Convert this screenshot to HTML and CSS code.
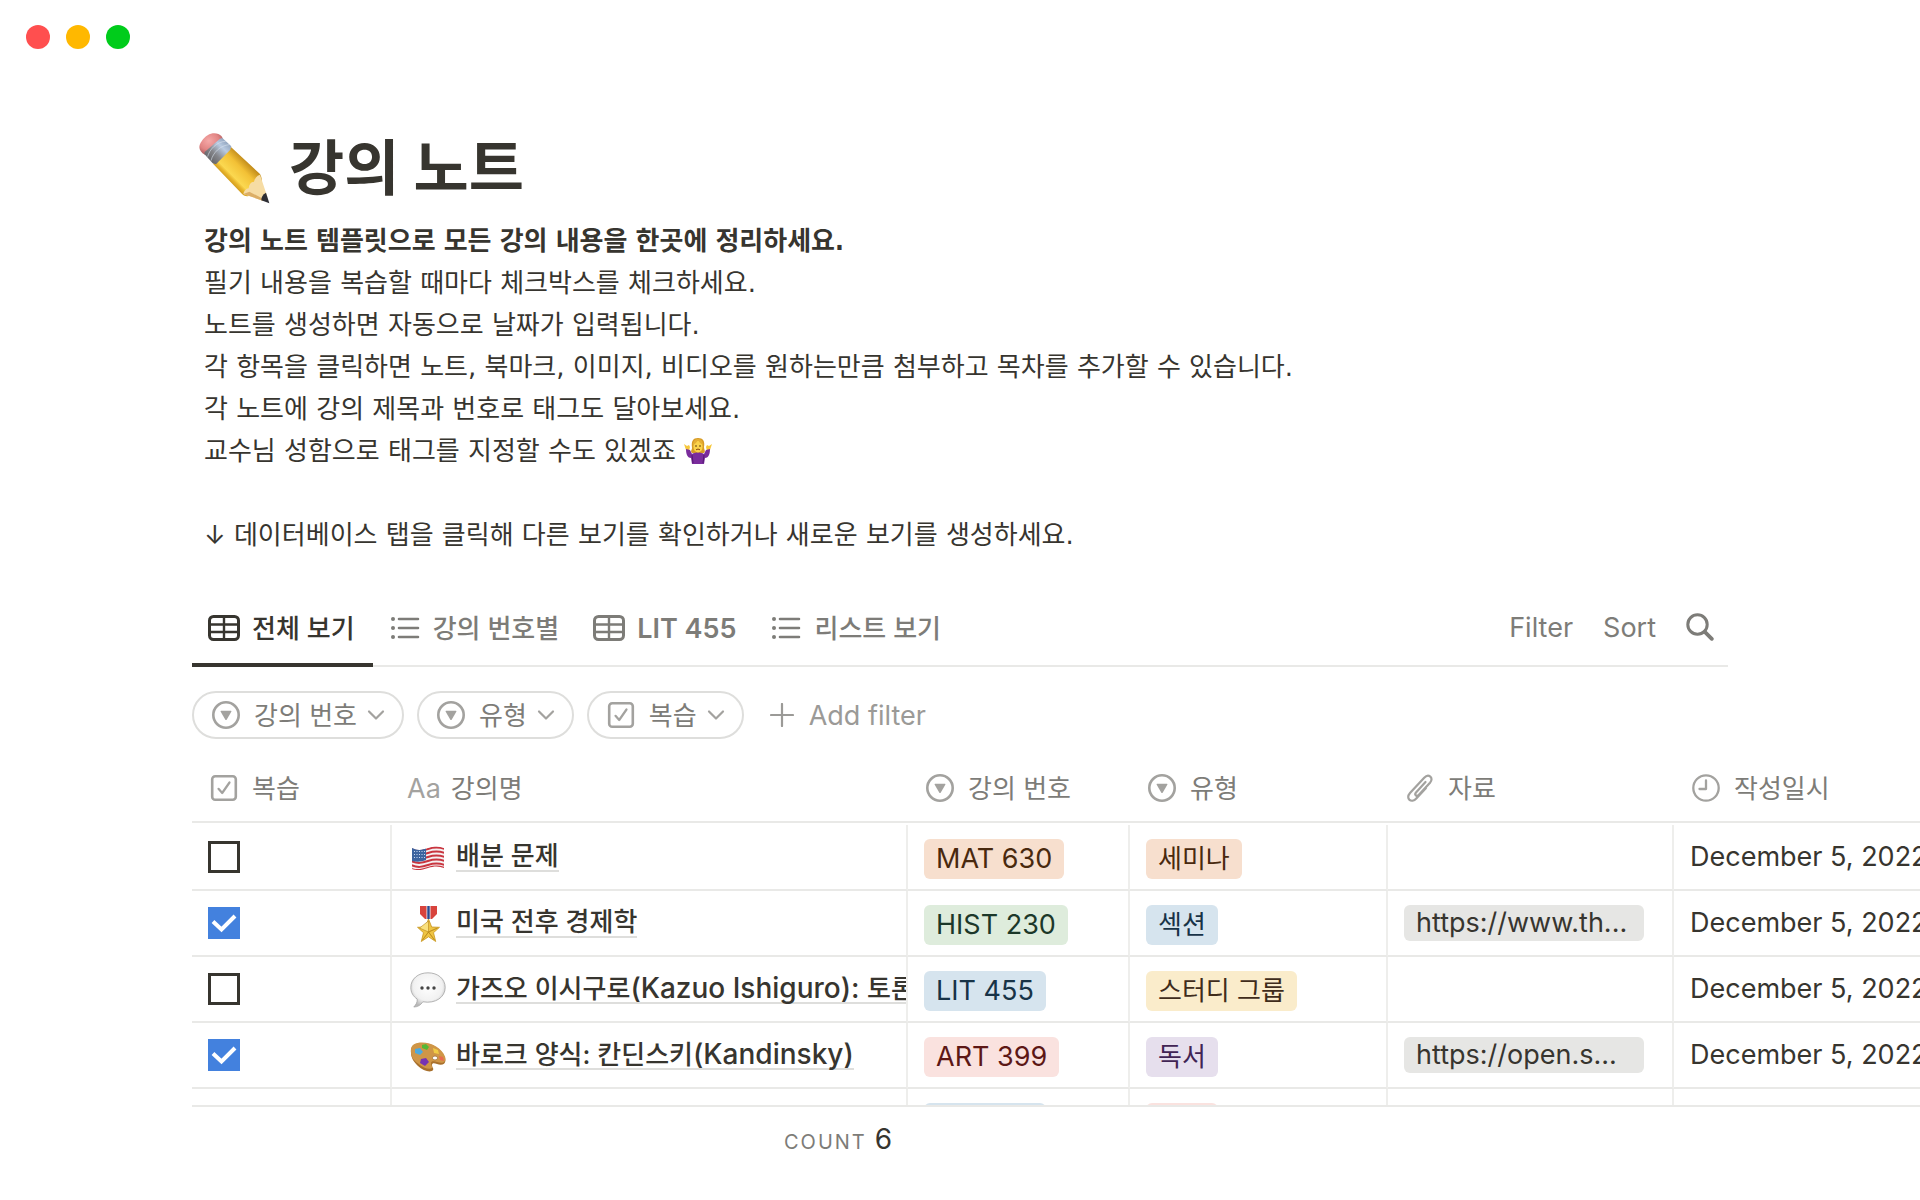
FILE: index.html
```html
<!DOCTYPE html>
<html lang="ko">
<head>
    <meta charset="UTF-8">
    <meta name="viewport" content="width=device-width, initial-scale=1.0">
    <title>강의 노트</title>
    <link rel="stylesheet" href="styles.css">
</head>
<body>
    <!-- shared icons -->
    <svg class="sprite" aria-hidden="true">
        <symbol id="i-table" viewBox="0 0 32 32">
            <rect x="1.5" y="4.5" width="29" height="23" rx="4" fill="none" stroke="currentColor" stroke-width="3"/>
            <path d="M2 12.5h28M2 20h28M16 5v22" fill="none" stroke="currentColor" stroke-width="2.4"/>
        </symbol>
        <symbol id="i-list" viewBox="0 0 32 32">
            <path d="M10 7h19M10 16h19M10 25h19" fill="none" stroke="currentColor" stroke-width="2.6" stroke-linecap="round"/>
            <circle cx="4" cy="7" r="2"/><circle cx="4" cy="16" r="2"/><circle cx="4" cy="25" r="2"/>
        </symbol>
        <symbol id="i-select" viewBox="0 0 28 28">
            <circle cx="14" cy="14" r="12.7" fill="none" stroke="currentColor" stroke-width="2.6"/>
            <path d="M9.2 9.8h9.6q1 0 .5 1l-4.5 7.7q-.8 1.2-1.6 0L8.7 10.8q-.5-1 .5-1z"/>
        </symbol>
        <symbol id="i-check" viewBox="0 0 28 28">
            <rect x="2.2" y="2.2" width="23.6" height="23.6" rx="3" fill="none" stroke="currentColor" stroke-width="2.6"/>
            <path d="M8.5 14.8l3.7 4.2 7.3-10.5" fill="none" stroke="currentColor" stroke-width="2.2" stroke-linecap="round" stroke-linejoin="round"/>
        </symbol>
        <symbol id="i-clip" viewBox="0 0 28 28">
            <path d="M19.5 8L10 18.5c-2 2.3.8 4.6 2.7 2.5L24 8.7c4.3-5-1.5-9.7-5.8-5L4 19c-5 5.700 1.500 10.800 6.300 5.500l9.500-10.300" fill="none" stroke="currentColor" stroke-width="2.2" stroke-linecap="round"/>
        </symbol>
        <symbol id="i-clock" viewBox="0 0 28 28">
            <circle cx="14" cy="14" r="12.7" fill="none" stroke="currentColor" stroke-width="2.3"/>
            <path d="M14 6.5V15H7.5" fill="none" stroke="currentColor" stroke-width="2.3" stroke-linecap="round" stroke-linejoin="round"/>
        </symbol>
        <symbol id="i-down" viewBox="0 0 18 18">
            <path d="M2 5.5l7 7 7-7" fill="none" stroke="currentColor" stroke-width="2.2" stroke-linecap="round" stroke-linejoin="round"/>
        </symbol>
    </svg>

    <div class="page">
        <div class="window-dots">
            <span class="dot red"></span>
            <span class="dot yellow"></span>
            <span class="dot green"></span>
        </div>

        <header class="title">
            <svg class="title-icon" viewBox="12 6 216 216" aria-hidden="true">
                <defs>
                    <linearGradient id="wood" gradientUnits="userSpaceOnUse" x1="95" y1="155" x2="155" y2="95">
                        <stop offset="0" stop-color="#c48b14"/>
                        <stop offset=".2" stop-color="#e8b62c"/>
                        <stop offset=".3" stop-color="#fbd850"/>
                        <stop offset=".7" stop-color="#f3c136"/>
                        <stop offset="1" stop-color="#c48e1c"/>
                    </linearGradient>
                    <linearGradient id="metal" x1="0" y1="1" x2="1" y2="0">
                        <stop offset="0" stop-color="#4d4d50"/>
                        <stop offset=".4" stop-color="#85868b"/>
                        <stop offset=".65" stop-color="#b9cbe2"/>
                        <stop offset="1" stop-color="#7488a3"/>
                    </linearGradient>
                    <radialGradient id="rubber" cx=".4" cy=".35" r=".7">
                        <stop offset="0" stop-color="#f5a9a8"/>
                        <stop offset=".6" stop-color="#e28584"/>
                        <stop offset="1" stop-color="#a8575a"/>
                    </radialGradient>
                </defs>
                <path d="M30 74C12 64 8 50 20 34 34 12 54 6 70 12c8 3 12 8 14 16z" fill="url(#rubber)"/>
                <path d="M54 101L107 50l88 82c8 12 6 34 6 46l-40 20c-8 2-16-1-22-8z" fill="url(#wood)"/>
                <path d="M82 24l27 25-3 10-43 44-10-3-25-28 1-6 46-40z" fill="url(#metal)"/>
                <path d="M38 80C42 60 66 34 92 34M48 92C54 68 76 46 103 44" stroke="#d8e2ef" stroke-width="3" fill="none" opacity=".6"/>
                <path d="M195 134l22 66-14 12-58-20c2-10 8-16 16-17 1-12 6-19 16-20 2-10 8-18 18-21z" fill="#f6dca4"/>
                <path d="M145 192l58 20 4-4-44-23z" fill="#dcae66"/>
                <path d="M213 188l10 32-24-9c0-10 4-18 14-23z" fill="#2c2d33"/>
            </svg>
            <h1>강의 노트</h1>
        </header>

        <div class="intro">
            <p><strong>강의 노트 템플릿으로 모든 강의 내용을 한곳에 정리하세요.</strong></p>
            <p>필기 내용을 복습할 때마다 체크박스를 체크하세요.</p>
            <p>노트를 생성하면 자동으로 날짜가 입력됩니다.</p>
            <p>각 항목을 클릭하면 노트, 북마크, 이미지, 비디오를 원하는만큼 첨부하고 목차를 추가할 수 있습니다.</p>
            <p>각 노트에 강의 제목과 번호로 태그도 달아보세요.</p>
            <p>교수님 성함으로 태그를 지정할 수도 있겠죠
                <svg class="shrug" viewBox="0 0 28 28" aria-hidden="true">
                    <path d="M8 11C7 4 9 1 14 1s7 3 6 9c0 3 2 4 0 6H8c-2-2 0-3 0-5z" fill="#d79b25"/>
                    <path d="M0 7l3 2 2-1 1 2-1 4-3-1zM28 7l-3 2-2-1-1 2 1 4 3-1z" fill="#f7c83c"/>
                    <path d="M2 12l4 1 2 4c3-2 9-2 12 0l2-4 4-1c0 6-2 9-5 9l-1 6H8l-1-6c-3 0-5-3-5-9z" fill="#7a2c9c"/>
                    <path d="M8 18l1 8M20 18l-1 8" stroke="#541871" stroke-width="1"/>
                    <ellipse cx="14" cy="9.5" rx="4.6" ry="6" fill="#fbd24b"/>
                    <path d="M9 8c2-1 4-3 5-5 1 2 3 4 5 5 0-4-2-6-5-6S9 4 9 8z" fill="#e5ae35"/>
                    <circle cx="12" cy="9" r=".8" fill="#4b2c0b"/><circle cx="16" cy="9" r=".8" fill="#4b2c0b"/>
                    <path d="M12 12.8q2-1.500 4 0" stroke="#8a4a12" stroke-width="1" fill="none"/>
                </svg>
            </p>
            <p>&nbsp;</p>
            <p><span class="arrow">↓</span> 데이터베이스 탭을 클릭해 다른 보기를 확인하거나 새로운 보기를 생성하세요.</p>
        </div>

        <nav class="tabs">
            <button class="tab active"><svg><use href="#i-table"/></svg><span class="ko">전체 보기</span></button>
            <button class="tab"><svg><use href="#i-list"/></svg><span class="ko">강의 번호별</span></button>
            <button class="tab latin"><svg><use href="#i-table"/></svg>LIT 455</button>
            <button class="tab"><svg><use href="#i-list"/></svg><span class="ko">리스트 보기</span></button>
            <div class="tools">
                <button>Filter</button>
                <button>Sort</button>
                <button aria-label="Search">
                    <svg viewBox="0 0 28 28">
                        <circle cx="11.5" cy="11.5" r="9.7" fill="none" stroke="currentColor" stroke-width="3"/>
                        <path d="M18.800 18.800l7 7" stroke="currentColor" stroke-width="3.8" stroke-linecap="round"/>
                    </svg>
                </button>
            </div>
        </nav>

        <div class="filters">
            <button class="pill"><svg class="icon"><use href="#i-select"/></svg><span class="ko">강의 번호</span><svg class="down"><use href="#i-down"/></svg></button>
            <button class="pill"><svg class="icon"><use href="#i-select"/></svg><span class="ko">유형</span><svg class="down"><use href="#i-down"/></svg></button>
            <button class="pill"><svg class="icon"><use href="#i-check"/></svg><span class="ko">복습</span><svg class="down"><use href="#i-down"/></svg></button>
            <button class="add-filter">
                <svg viewBox="0 0 24 24"><path d="M12 1v22M1 12h22" stroke="currentColor" stroke-width="2.2" stroke-linecap="round"/></svg>
                Add filter
            </button>
        </div>

        <div class="table-scroll">
            <table>
                <colgroup>
                    <col class="col-check">
                    <col class="col-name">
                    <col class="col-number">
                    <col class="col-type">
                    <col class="col-file">
                    <col class="col-date">
                </colgroup>
                <thead>
                    <tr>
                        <th><div class="head"><svg class="icon"><use href="#i-check"/></svg><span class="ko">복습</span></div></th>
                        <th><div class="head name"><span class="aa">Aa</span><span class="ko">강의명</span></div></th>
                        <th><div class="head"><svg class="icon"><use href="#i-select"/></svg><span class="ko">강의 번호</span></div></th>
                        <th><div class="head"><svg class="icon"><use href="#i-select"/></svg><span class="ko">유형</span></div></th>
                        <th><div class="head"><svg class="icon"><use href="#i-clip"/></svg><span class="ko">자료</span></div></th>
                        <th><div class="head"><svg class="icon"><use href="#i-clock"/></svg><span class="ko">작성일시</span></div></th>
                    </tr>
                </thead>
                <tbody>
                    <tr>
                        <td><input type="checkbox" aria-label="배분 문제 복습"></td>
                        <td>
                            <div class="name-cell">
                                <svg class="emoji" viewBox="0 0 36 36" aria-hidden="true">
                                    <clipPath id="wave"><path d="M2 8c6 3 10 2 16 0s11-2 16 0v20c-5-2-10-2-16 0s-10 3-16 1z"/></clipPath>
                                    <g clip-path="url(#wave)">
                                        <path d="M0 0h36v36H0z" fill="#f5f1f2"/>
                                        <path d="M1 9c7 3 11 2 17 0s11-2 17 0M1 13c7 3 11 2 17 0s11-2 17 0M1 17c7 3 11 2 17 0s11-2 17 0M1 21c7 3 11 2 17 0s11-2 17 0M1 25c7 3 11 2 17 0s11-2 17 0M1 29c7 2 11 1 17-1s11-2 17 0" fill="none" stroke="#c9353f" stroke-width="2"/>
                                        <path d="M2 6h14v14c-5 2-9 2-14 1z" fill="#3c649f"/>
                                        <path d="M4 11.5h11M4 14.5h11M4 17.5h11" stroke="#c9d8ee" stroke-width="1" stroke-dasharray="1 1.5"/>
                                    </g>
                                </svg>
                                <a href="#">배분 문제</a>
                            </div>
                        </td>
                        <td><span class="tag latin orange">MAT 630</span></td>
                        <td><span class="tag orange">세미나</span></td>
                        <td></td>
                        <td class="date">December 5, 2022 11:05 AM</td>
                    </tr>
                    <tr>
                        <td><input type="checkbox" aria-label="미국 전후 경제학 복습" checked></td>
                        <td>
                            <div class="name-cell">
                                <svg class="emoji" viewBox="0 0 36 36" aria-hidden="true">
                                    <path d="M10 0h17v8l-5 5h-7l-5-5z" fill="#d8433c"/>
                                    <path d="M16.500 0h4v13h-4z" fill="#e9eef7"/>
                                    <path d="M17.300 0h2.400v13h-2.400z" fill="#29498f"/>
                                    <path d="M18.500 13l3.200 8 7.800.3-6 5.400 2.200 8.800-7.200-4.700-7.200 4.700 2.200-8.800-6-5.400 7.800-.3z" fill="#efc544" stroke="#c8961f" stroke-width=".8"/>
                                    <path d="M18.500 15v11l9-4-9 4 6 8-6-8-6 8 6-8-9-4z" fill="#f9e07e" stroke="#b78518" stroke-width=".6"/>
                                </svg>
                                <a href="#">미국 전후 경제학</a>
                            </div>
                        </td>
                        <td><span class="tag latin green">HIST 230</span></td>
                        <td><span class="tag blue">섹션</span></td>
                        <td><a class="file" href="#">https://www.th...</a></td>
                        <td class="date">December 5, 2022 11:05 AM</td>
                    </tr>
                    <tr>
                        <td><input type="checkbox" aria-label="가즈오 이시구로 복습"></td>
                        <td>
                            <div class="name-cell">
                                <svg class="emoji" viewBox="0 0 36 36" aria-hidden="true">
                                    <radialGradient id="bubble" cx=".5" cy=".4" r=".6">
                                        <stop offset="0" stop-color="#ffffff"/>
                                        <stop offset=".7" stop-color="#f1f1f1"/>
                                        <stop offset="1" stop-color="#b9b9b9"/>
                                    </radialGradient>
                                    <path d="M18 .8C8 .8.800 7 .8 15.500c0 5 2.400 9 6.400 11.500.4 3-1 5.500-3.400 8 4 0 7-2 9-5.200 13 2.200 22.400-4.800 22.400-14.300C35.200 7 28 .8 18 .8z" fill="url(#bubble)" stroke="#a3a3a3" stroke-width=".8"/>
                                    <circle cx="12" cy="16" r="1.7" fill="#454545"/><circle cx="18" cy="16" r="1.7" fill="#454545"/><circle cx="24" cy="16" r="1.7" fill="#454545"/>
                                </svg>
                                <a href="#">가즈오 이시구로<span class="latin">(Kazuo Ishiguro): </span>토론</a>
                            </div>
                        </td>
                        <td><span class="tag latin blue">LIT 455</span></td>
                        <td><span class="tag yellow">스터디 그룹</span></td>
                        <td></td>
                        <td class="date">December 5, 2022 11:05 AM</td>
                    </tr>
                    <tr>
                        <td><input type="checkbox" aria-label="바로크 양식 복습" checked></td>
                        <td>
                            <div class="name-cell">
                                <svg class="emoji" viewBox="0 0 36 36" aria-hidden="true">
                                    <path d="M1 15C0 8 5 5 12 5c10 0 20 6 23 15 2 6-3 8-8 6-3-1-5-1-5 1 0 3 2 3 1 5-2 3-10 1-15-4C4 24 1 20 1 15z" fill="#a8702c"/>
                                    <path d="M1 14C0 7 5 4.500 12 4.500c10 0 20 6 23 14 2 6-3 7.500-8 5.500-3-1-6-1-6 1 0 3 2 3 1 5-2 2-9 0-14-4.500C4 23 1 19 1 14z" fill="#cf9647"/>
                                    <ellipse cx="25" cy="20" rx="2.6" ry="1.9" fill="#fff" stroke="#8e5c20" stroke-width=".6"/>
                                    <path d="M5 11l5-1 3 4-3 3-5-2z" fill="#4ea9dc"/>
                                    <path d="M12 7l4-1 3 3-2 3-5-2z" fill="#55b835"/>
                                    <path d="M23 10l5 2 1 4-5-1z" fill="#f0cb45"/>
                                    <path d="M29 18l4 1 1 4-4-1z" fill="#ea6a4e"/>
                                    <path d="M11 21l5-1 3 4-4 4-5-3z" fill="#7632b4"/>
                                </svg>
                                <a href="#">바로크 양식: 칸딘스키<span class="latin">(Kandinsky)</span></a>
                            </div>
                        </td>
                        <td><span class="tag latin pink">ART 399</span></td>
                        <td><span class="tag purple">독서</span></td>
                        <td><a class="file" href="#">https://open.s...</a></td>
                        <td class="date">December 5, 2022 11:05 AM</td>
                    </tr>
                    <!-- cut off by the bottom edge of the scroller -->
                    <tr>
                        <td></td>
                        <td></td>
                        <td><span class="tag latin blue">LIT 455</span></td>
                        <td><span class="tag pink">시험</span></td>
                        <td></td>
                        <td></td>
                    </tr>
                </tbody>
            </table>
        </div>

        <footer class="summary"><span class="label">COUNT</span> 6</footer>
    </div>
</body>
</html>
```

FILE: styles.css
```css
* {
    box-sizing: border-box;
}
body {
    margin: 0;
    background-color: #fff;
    color: #37352f;
    font-family: Inter, 'Noto Sans CJK KR', sans-serif;
    font-size: 26px;
}
button {
    background: none;
    border: none;
    padding: 0;
    margin: 0;
    color: inherit;
    font: inherit;
    cursor: pointer;
}
svg {
    flex: none;
    fill: currentColor;
}
a {
    color: inherit;
    text-decoration: none;
}
.sprite {
    display: none;
}
.latin {
    font-size: 27px;
}
/* hangul sits low next to icons */
.ko {
    padding-bottom: 4px;
}
.page {
    display: flex;
    flex-direction: column;
    height: 100vh;
    padding-left: 192px;
    overflow: hidden;
}

/* window buttons */
.window-dots {
    display: flex;
    gap: 16px;
    margin: 25px 0 83px -166px;
}
.dot {
    width: 24px;
    height: 24px;
    border-radius: 50%;
}
.red { background-color: #ff4f4f; }
.yellow { background-color: #ffb800; }
.green { background-color: #00cc1b; }

/* title and intro */
.title {
    display: flex;
    gap: 18px;
    padding-left: 7px;
}
.title-icon {
    width: 72px;
    height: 72px;
}
h1 {
    margin: 0;
    font-size: 60px;
    font-weight: 700;
    line-height: 72px;
}
.intro {
    margin: 16px 192px 33px 12px;
    font-family: 'DejaVu Sans', 'Noto Sans CJK KR', sans-serif;
}
.intro p {
    margin: 0;
    line-height: 42px;
}
.intro strong {
    font-family: 'DejaVu Sans Condensed', 'Noto Sans CJK KR', sans-serif;
}
.shrug {
    width: 28px;
    height: 28px;
    vertical-align: -5px;
}
.arrow {
    font-family: Inter, sans-serif;
}

/* view tabs */
.tabs {
    display: flex;
    height: 78px;
    margin-right: 192px;
    border-bottom: 2px solid #e9e9e7;
    color: #7d7c78;
    font-weight: 500;
}
.tab {
    display: flex;
    align-items: center;
    gap: 12px;
    height: 78px;
    padding: 0 18px 0 16px;
    border-top: 4px solid transparent;
    border-bottom: 4px solid transparent;
}
.tab.active {
    color: #37352f;
    border-bottom-color: #37352f;
}
.tab.latin {
    font-weight: 600;
}
.tab svg {
    width: 32px;
    height: 32px;
}
.tools {
    display: flex;
    align-items: center;
    gap: 30px;
    margin-left: auto;
    padding-right: 14px;
    font-size: 27px;
    font-weight: 400;
}
.tools svg {
    display: block;
    width: 28px;
    height: 28px;
}

/* filter pills */
.filters {
    display: flex;
    gap: 13px;
    margin: 24px 0 16px;
    color: #7d7c78;
}
.pill {
    display: flex;
    align-items: center;
    height: 48px;
    padding: 0 17px 0 18px;
    border: 2px solid #dededc;
    border-radius: 24px;
}
.icon {
    width: 28px;
    height: 28px;
    margin-right: 14px;
    color: #a3a29f;
}
.down {
    width: 18px;
    height: 18px;
    margin-left: 10px;
    color: #a3a29f;
}
.add-filter {
    display: flex;
    align-items: center;
    gap: 15px;
    margin-left: 13px;
    color: #9b9a97;
    font-size: 27px;
}
.add-filter svg {
    width: 24px;
    height: 24px;
}

/* database table */
.table-scroll {
    flex: 1;
    min-height: 0;
    overflow: hidden;
    border-bottom: 2px solid #e9e9e7;
}
table {
    width: 2000px;
    table-layout: fixed;
    border-collapse: separate;
    border-spacing: 0;
}
.col-check { width: 200px; }
.col-name { width: 516px; }
.col-number { width: 222px; }
.col-type { width: 258px; }
.col-file { width: 286px; }
th {
    height: 68px;
    padding: 0 16px 0 18px;
    border-bottom: 2px solid #e9e9e7;
    color: #7d7c78;
    font-weight: 400;
    text-align: left;
}
.head {
    display: flex;
    align-items: center;
    white-space: nowrap;
}
.aa {
    margin-right: 10px;
    color: #a3a29f;
    font-size: 27px;
}
.head.name {
    margin-left: -3px;
}
tbody::before {
    content: "";
    display: block;
    height: 2px;
}
td {
    height: 66px;
    padding: 14px 16px 0;
    border-right: 2px solid #eeeeec;
    border-bottom: 2px solid #e9e9e7;
    vertical-align: top;
    white-space: nowrap;
    overflow: hidden;
}
td:nth-child(2) {
    padding: 15px 0 0 18px;
}
input[type="checkbox"] {
    appearance: none;
    display: block;
    width: 32px;
    height: 32px;
    margin: 2px 0;
    border: 3px solid #37352f;
    background-color: #fff;
}
input[type="checkbox"]:checked {
    border: none;
    background: #4381de url("data:image/svg+xml,%3Csvg xmlns='http://www.w3.org/2000/svg' viewBox='0 0 32 32'%3E%3Cpath d='M5 14.5l8.5 8L27 9' fill='none' stroke='white' stroke-width='4'/%3E%3C/svg%3E");
}
.name-cell {
    display: flex;
    gap: 10px;
}
.name-cell a {
    height: 32px;
    border-bottom: 2px solid #dededc;
    font-weight: 500;
    line-height: 32px;
}
.name-cell .latin {
    font-size: 28px;
}
.emoji {
    width: 36px;
    height: 36px;
}
.tag {
    display: inline-block;
    height: 40px;
    padding: 0 12px;
    border-radius: 6px;
    line-height: 40px;
    vertical-align: top;
}
.file {
    display: block;
    width: 240px;
    height: 36px;
    padding: 0 12px;
    border-radius: 6px;
    background-color: #e6e6e4;
    font-size: 27px;
    line-height: 36px;
}
.date {
    font-size: 27px;
    line-height: 36px;
}
.tag.orange { background-color: #f7dfce; color: #49290e; }
.tag.green { background-color: #deecdc; color: #1c3829; }
.tag.blue { background-color: #d6e4ee; color: #183347; }
.tag.yellow { background-color: #faeccb; color: #402c1b; }
.tag.pink { background-color: #fae2df; color: #5d1715; }
.tag.purple { background-color: #e6dfed; color: #412454; }

.summary {
    width: 716px;
    height: 93px;
    padding: 14px 16px 0;
    font-size: 28px;
    line-height: 36px;
    text-align: right;
}
.summary .label {
    color: #7d7c78;
    font-size: 20px;
    letter-spacing: 2px;
}
```
